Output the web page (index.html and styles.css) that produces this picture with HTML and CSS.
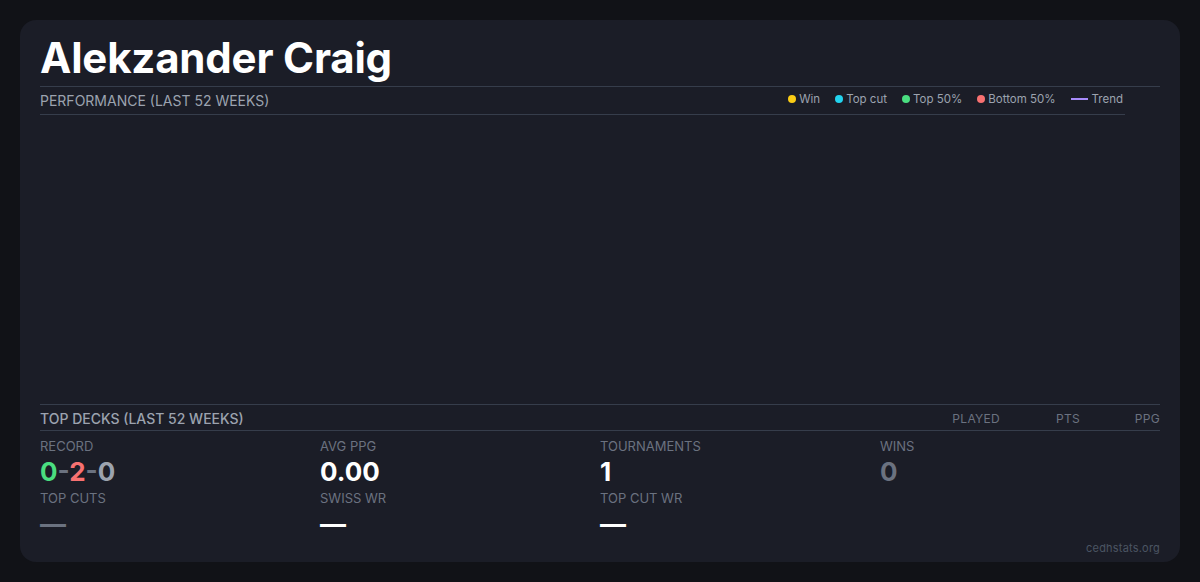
FILE: index.html
```html
<!DOCTYPE html>
<html lang="en">
<head>
<meta charset="utf-8">
<title>Alekzander Craig</title>
<link rel="stylesheet" href="styles.css">
</head>
<body>
<main class="card">
  <h1 class="name">Alekzander Craig</h1>
  <section class="perf">
    <div class="perf-head">
      <h2 class="section-title">PERFORMANCE (LAST 52 WEEKS)</h2>
      <ul class="legend">
        <li><span class="dot dot-win"></span>Win</li>
        <li><span class="dot dot-cut"></span>Top cut</li>
        <li><span class="dot dot-top"></span>Top 50%</li>
        <li><span class="dot dot-bottom"></span>Bottom 50%</li>
        <li><span class="trend-line"></span>Trend</li>
      </ul>
    </div>
    <div class="chart"></div>
  </section>
  <section class="decks">
    <div class="decks-head">
      <h2 class="section-title strong">TOP DECKS (LAST 52 WEEKS)</h2>
      <div class="cols">
        <span>PLAYED</span>
        <span>PTS</span>
        <span>PPG</span>
      </div>
    </div>
  </section>
  <div class="stats">
    <div class="stat">
      <div class="label">RECORD</div>
      <div class="value"><span class="g">0</span><span class="sep">-</span><span class="r">2</span><span class="sep">-</span><span class="n">0</span></div>
    </div>
    <div class="stat">
      <div class="label">AVG PPG</div>
      <div class="value">0.00</div>
    </div>
    <div class="stat">
      <div class="label">TOURNAMENTS</div>
      <div class="value">1</div>
    </div>
    <div class="stat">
      <div class="label">WINS</div>
      <div class="value muted">0</div>
    </div>
    <div class="stat">
      <div class="label">TOP CUTS</div>
      <div class="value muted">—</div>
    </div>
    <div class="stat">
      <div class="label">SWISS WR</div>
      <div class="value">—</div>
    </div>
    <div class="stat">
      <div class="label">TOP CUT WR</div>
      <div class="value">—</div>
    </div>
    <div class="stat"></div>
  </div>
  <footer class="footer">cedhstats.org</footer>
</main>
</body>
</html>
```
FILE: styles.css
```css
* { box-sizing: border-box; }
html, body { margin: 0; padding: 0; }
body {
  background: #111217;
  font-family: Inter, "Noto Sans", sans-serif;
  color: #fff;
  padding: 20px;
}
.card {
  height: 542px;
  background: #1b1d27;
  border-radius: 16px;
  padding: 16px 20px 6px;
  display: flex;
  flex-direction: column;
}
.name {
  margin: 0 0 6px;
  font-size: 42px;
  line-height: 44px;
  font-weight: 700;
  color: #fff;
  letter-spacing: -0.2px;
}
.perf {
  border-top: 1px solid #363d4b;
  flex: 1;
  display: flex;
  flex-direction: column;
}
.perf-head {
  display: flex;
  justify-content: space-between;
  align-items: flex-start;
  margin-right: 35px;
  border-bottom: 1px solid #363d4b;
  height: 28px;
}
.section-title {
  margin: 0;
  font-size: 14px;
  line-height: 20px;
  font-weight: 400;
  color: #9ca3af;
  padding-top: 4px;
}
.section-title.strong { font-weight: 500; }
.legend {
  list-style: none;
  margin: 0 2px 0 0;
  padding: 0;
  display: flex;
  gap: 15px;
  height: 24px;
  align-items: center;
  font-size: 11.5px;
  color: #9ca3af;
}
.legend li {
  display: flex;
  align-items: center;
  gap: 3px;
}
.dot {
  width: 8px;
  height: 8px;
  border-radius: 50%;
  display: inline-block;
}
.dot-win { background: #facc15; }
.dot-cut { background: #22d3ee; }
.dot-top { background: #4ade80; }
.dot-bottom { background: #f87171; }
.trend-line {
  width: 17px;
  height: 2px;
  background: #a78bfa;
  display: inline-block;
  margin-right: 1px;
}
.chart { flex: 1; }
.decks { border-top: 1px solid #363d4b; }
.decks-head {
  display: flex;
  justify-content: space-between;
  border-bottom: 1px solid #363d4b;
  height: 26px;
}
.cols {
  display: flex;
  font-size: 12px;
  line-height: 20px;
  padding-top: 4px;
  color: #6b7280;
  letter-spacing: 0.3px;
}
.cols span {
  width: 80px;
  text-align: right;
}
.stats {
  display: grid;
  grid-template-columns: repeat(4, 1fr);
  row-gap: 2px;
  padding-top: 7px;
}
.label {
  font-size: 13px;
  line-height: 16px;
  color: #6b7280;
}
.value {
  margin-top: 2px;
  font-size: 26px;
  line-height: 32px;
  font-weight: 700;
  color: #fff;
}
.value.muted { color: #6b7280; }
.g { color: #4ade80; }
.r { color: #f87171; }
.sep { color: #6b7280; }
.n { color: #9ca3af; }
.footer {
  text-align: right;
  font-size: 11px;
  line-height: 16px;
  color: #4b5563;
  letter-spacing: 0.2px;
}
```
